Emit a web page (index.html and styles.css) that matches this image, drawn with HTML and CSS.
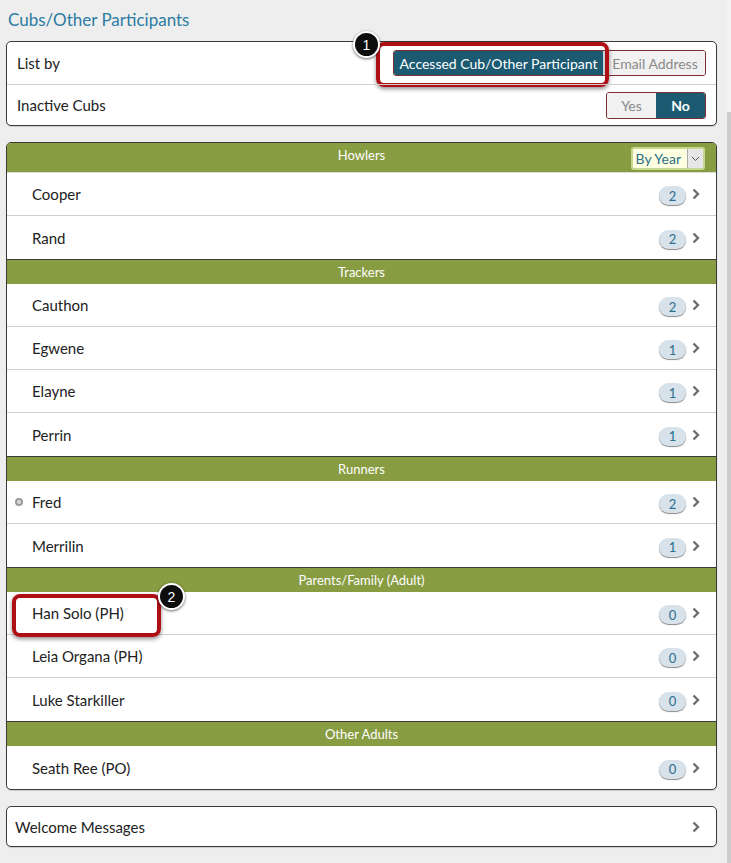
FILE: index.html
```html
<!DOCTYPE html>
<html lang="en">
<head>
<meta charset="utf-8">
<title>Cubs/Other Participants</title>
<link rel="stylesheet" href="styles.css">
</head>
<body>
<div class="page">
  <main class="content">
    <h1 class="title">Cubs/Other Participants</h1>

    <section class="panel settings">
      <div class="setting-row">
        <span class="setting-label">List by</span>
        <div class="seg seg-list">
          <span class="seg-btn active wide">Accessed Cub/Other Participant</span>
          <span class="seg-btn email">Email Address</span>
        </div>
        <div class="annot-box annot-1"></div>
        <span class="callout callout-1">1</span>
      </div>
      <div class="setting-row">
        <span class="setting-label">Inactive Cubs</span>
        <div class="seg seg-toggle">
          <span class="seg-btn half">Yes</span>
          <span class="seg-btn half active bold">No</span>
        </div>
      </div>
    </section>

    <section class="panel list">
      <div class="group-head first">
        <span></span>
        <span class="group-title">Howlers</span>
        <span class="select"><span class="select-text">By Year</span><span class="select-arrow"><svg width="9" height="6" viewBox="0 0 9 6"><polyline points="1,1 4.5,4.5 8,1" fill="none" stroke="#555" stroke-width="1"/></svg></span></span>
      </div>
      <div class="row"><span class="name">Cooper</span><span class="badge">2</span><svg class="chev" width="8" height="12" viewBox="0 0 8 12"><polyline points="1.5,1.5 6,6 1.5,10.5" fill="none" stroke="#6e6e6e" stroke-width="2.4"/></svg></div>
      <div class="row last"><span class="name">Rand</span><span class="badge">2</span><svg class="chev" width="8" height="12" viewBox="0 0 8 12"><polyline points="1.5,1.5 6,6 1.5,10.5" fill="none" stroke="#6e6e6e" stroke-width="2.4"/></svg></div>

      <div class="group-head"><span class="group-title">Trackers</span></div>
      <div class="row"><span class="name">Cauthon</span><span class="badge">2</span><svg class="chev" width="8" height="12" viewBox="0 0 8 12"><polyline points="1.5,1.5 6,6 1.5,10.5" fill="none" stroke="#6e6e6e" stroke-width="2.4"/></svg></div>
      <div class="row"><span class="name">Egwene</span><span class="badge">1</span><svg class="chev" width="8" height="12" viewBox="0 0 8 12"><polyline points="1.5,1.5 6,6 1.5,10.5" fill="none" stroke="#6e6e6e" stroke-width="2.4"/></svg></div>
      <div class="row"><span class="name">Elayne</span><span class="badge">1</span><svg class="chev" width="8" height="12" viewBox="0 0 8 12"><polyline points="1.5,1.5 6,6 1.5,10.5" fill="none" stroke="#6e6e6e" stroke-width="2.4"/></svg></div>
      <div class="row last"><span class="name">Perrin</span><span class="badge">1</span><svg class="chev" width="8" height="12" viewBox="0 0 8 12"><polyline points="1.5,1.5 6,6 1.5,10.5" fill="none" stroke="#6e6e6e" stroke-width="2.4"/></svg></div>

      <div class="group-head"><span class="group-title">Runners</span></div>
      <div class="row"><span class="bullet"></span><span class="name">Fred</span><span class="badge">2</span><svg class="chev" width="8" height="12" viewBox="0 0 8 12"><polyline points="1.5,1.5 6,6 1.5,10.5" fill="none" stroke="#6e6e6e" stroke-width="2.4"/></svg></div>
      <div class="row last"><span class="name">Merrilin</span><span class="badge">1</span><svg class="chev" width="8" height="12" viewBox="0 0 8 12"><polyline points="1.5,1.5 6,6 1.5,10.5" fill="none" stroke="#6e6e6e" stroke-width="2.4"/></svg></div>

      <div class="group-head"><span class="group-title">Parents/Family (Adult)</span></div>
      <div class="row annotated"><span class="name">Han Solo (PH)</span><span class="badge">0</span><svg class="chev" width="8" height="12" viewBox="0 0 8 12"><polyline points="1.5,1.5 6,6 1.5,10.5" fill="none" stroke="#6e6e6e" stroke-width="2.4"/></svg>
        <div class="annot-box annot-2"></div>
        <span class="callout callout-2">2</span>
      </div>
      <div class="row"><span class="name">Leia Organa (PH)</span><span class="badge">0</span><svg class="chev" width="8" height="12" viewBox="0 0 8 12"><polyline points="1.5,1.5 6,6 1.5,10.5" fill="none" stroke="#6e6e6e" stroke-width="2.4"/></svg></div>
      <div class="row last"><span class="name">Luke Starkiller</span><span class="badge">0</span><svg class="chev" width="8" height="12" viewBox="0 0 8 12"><polyline points="1.5,1.5 6,6 1.5,10.5" fill="none" stroke="#6e6e6e" stroke-width="2.4"/></svg></div>

      <div class="group-head"><span class="group-title">Other Adults</span></div>
      <div class="row last"><span class="name">Seath Ree (PO)</span><span class="badge">0</span><svg class="chev" width="8" height="12" viewBox="0 0 8 12"><polyline points="1.5,1.5 6,6 1.5,10.5" fill="none" stroke="#6e6e6e" stroke-width="2.4"/></svg></div>
    </section>

    <section class="panel welcome">
      <span class="welcome-text">Welcome Messages</span>
      <svg class="chev" width="8" height="12" viewBox="0 0 8 12"><polyline points="1.5,1.5 6,6 1.5,10.5" fill="none" stroke="#6e6e6e" stroke-width="2.4"/></svg>
    </section>
  </main>
  <div class="scrollbar"><div class="scroll-thumb"></div></div>
</div>
</body>
</html>
```

FILE: styles.css
```css
* { box-sizing: border-box; }
html, body { margin: 0; padding: 0; }
body {
  background: #eeeeee;
  font-family: Lato, "Open Sans", "Liberation Sans", sans-serif;
  color: #222;
  height: 863px;
  overflow: hidden;
}
.page {
  display: flex;
  height: 863px;
}
.content {
  flex: 1;
  padding: 0 10px 0 6px;
}
.scrollbar {
  width: 4px;
  background: #f3f3f3;
  display: flex;
  flex-direction: column;
  padding-top: 112px;
}
.scroll-thumb {
  flex: 1;
  background: #cdcdcd;
}
.title {
  margin: 10px 0 11px 2px;
  font-size: 17px;
  line-height: 20px;
  font-weight: 400;
  color: #2c7ca3;
}
.panel {
  background: #fff;
  border: 1px solid #3a3a3a;
  border-radius: 5px;
  box-shadow: 0 1px 1px rgba(0,0,0,0.15);
}
/* settings */
.setting-row {
  position: relative;
  height: 42px;
  display: flex;
  align-items: center;
  justify-content: space-between;
  padding: 0 10px;
  font-size: 15px;
}
.setting-row + .setting-row {
  border-top: 1px solid #cfcfcf;
  height: 41px;
}
.seg {
  display: flex;
  border: 1px solid #7d3030;
  border-radius: 3px;
  overflow: hidden;
  font-size: 14px;
}
.seg-btn {
  display: flex;
  align-items: center;
  justify-content: center;
  background: #f1f1f1;
  color: #8a8a8a;
}
.seg-btn.active {
  background: #1c5a71;
  color: #fff;
}
.seg-list { height: 26px; }
.seg-btn.wide { width: 211px; border-right: 2px solid #c9d3d8; }
.seg-btn.email { width: 100px; }
.seg-toggle { height: 27px; }
.seg-btn.half { width: 49px; }
.seg-btn.bold { font-weight: 700; }

.annot-box {
  position: absolute;
  border: 4px solid #ad0f14;
  border-radius: 8px;
  box-shadow: 0 2px 4px rgba(0,0,0,0.45);
  pointer-events: none;
}
.annot-1 { left: 369px; top: 0px; width: 233px; height: 45px; }
.callout {
  position: absolute;
  width: 27px;
  height: 27px;
  border-radius: 50%;
  background: #0d0d0d;
  border: 2px solid #fff;
  box-shadow: 0 1px 3px rgba(0,0,0,0.6);
  color: #fff;
  font-family: "Liberation Sans", Arial, sans-serif;
  font-size: 14px;
  display: flex;
  align-items: center;
  justify-content: center;
  z-index: 2;
}
.callout-1 { left: 346px; top: -11px; }

/* list panel */
.list { margin-top: 16px; overflow: visible; }
.group-head {
  background: #889c42;
  color: #fff;
  font-size: 13px;
  height: 25px;
  line-height: 24px;
  text-align: center;
  border-top: 1px solid #3a3a3a;
}
.group-head.first {
  border-top: none;
  border-radius: 4px 4px 0 0;
  height: 30px;
  display: grid;
  grid-template-columns: 1fr auto 1fr;
  align-items: start;
  padding: 4px 11px 0;
  line-height: 17px;
  border-bottom: 1px solid #d9dfd0;
}
.select {
  justify-self: end;
  display: flex;
  align-items: center;
  height: 23px;
  background: #ffffe2;
  border: 2px solid #c6d890;
  border-radius: 3px;
  padding-left: 3px;
  color: #2d6f86;
  font-size: 14px;
}
.select-text { margin-right: 6px; }
.select-arrow {
  width: 16px;
  height: 19px;
  background: #e6e6e6;
  border-left: 1px solid #aaa;
  display: flex;
  align-items: center;
  justify-content: center;
}
.row {
  position: relative;
  height: 43px;
  display: flex;
  align-items: center;
  padding: 0 16px 0 25px;
  border-bottom: 1px solid #d0d0d0;
  font-size: 15px;
}
.row.last { border-bottom: none; height: 43px; }
.name { flex: 1; }
.bullet {
  width: 8px;
  height: 8px;
  border-radius: 50%;
  margin-left: -17px;
  margin-right: 9px;
  background: radial-gradient(circle, #d8d8d8 0 1.5px, #9a9a9a 2.5px);
}
.badge {
  width: 27px;
  height: 19px;
  border-radius: 10px;
  background: #d7e2eb;
  color: #2a6f8e;
  font-size: 13px;
  display: flex;
  align-items: center;
  justify-content: center;
  margin-top: 3px;
  margin-right: 6px;
  box-shadow: 0 1px 1px #8a8a8a;
}
.annot-2 { left: 5px; top: 2px; width: 149px; height: 43px; }
.callout-2 { left: 151px; top: -9px; }

/* welcome */
.welcome {
  margin-top: 16px;
  height: 41px;
  display: flex;
  align-items: center;
  justify-content: space-between;
  padding: 0 16px 0 8px;
  font-size: 15px;
}
```
